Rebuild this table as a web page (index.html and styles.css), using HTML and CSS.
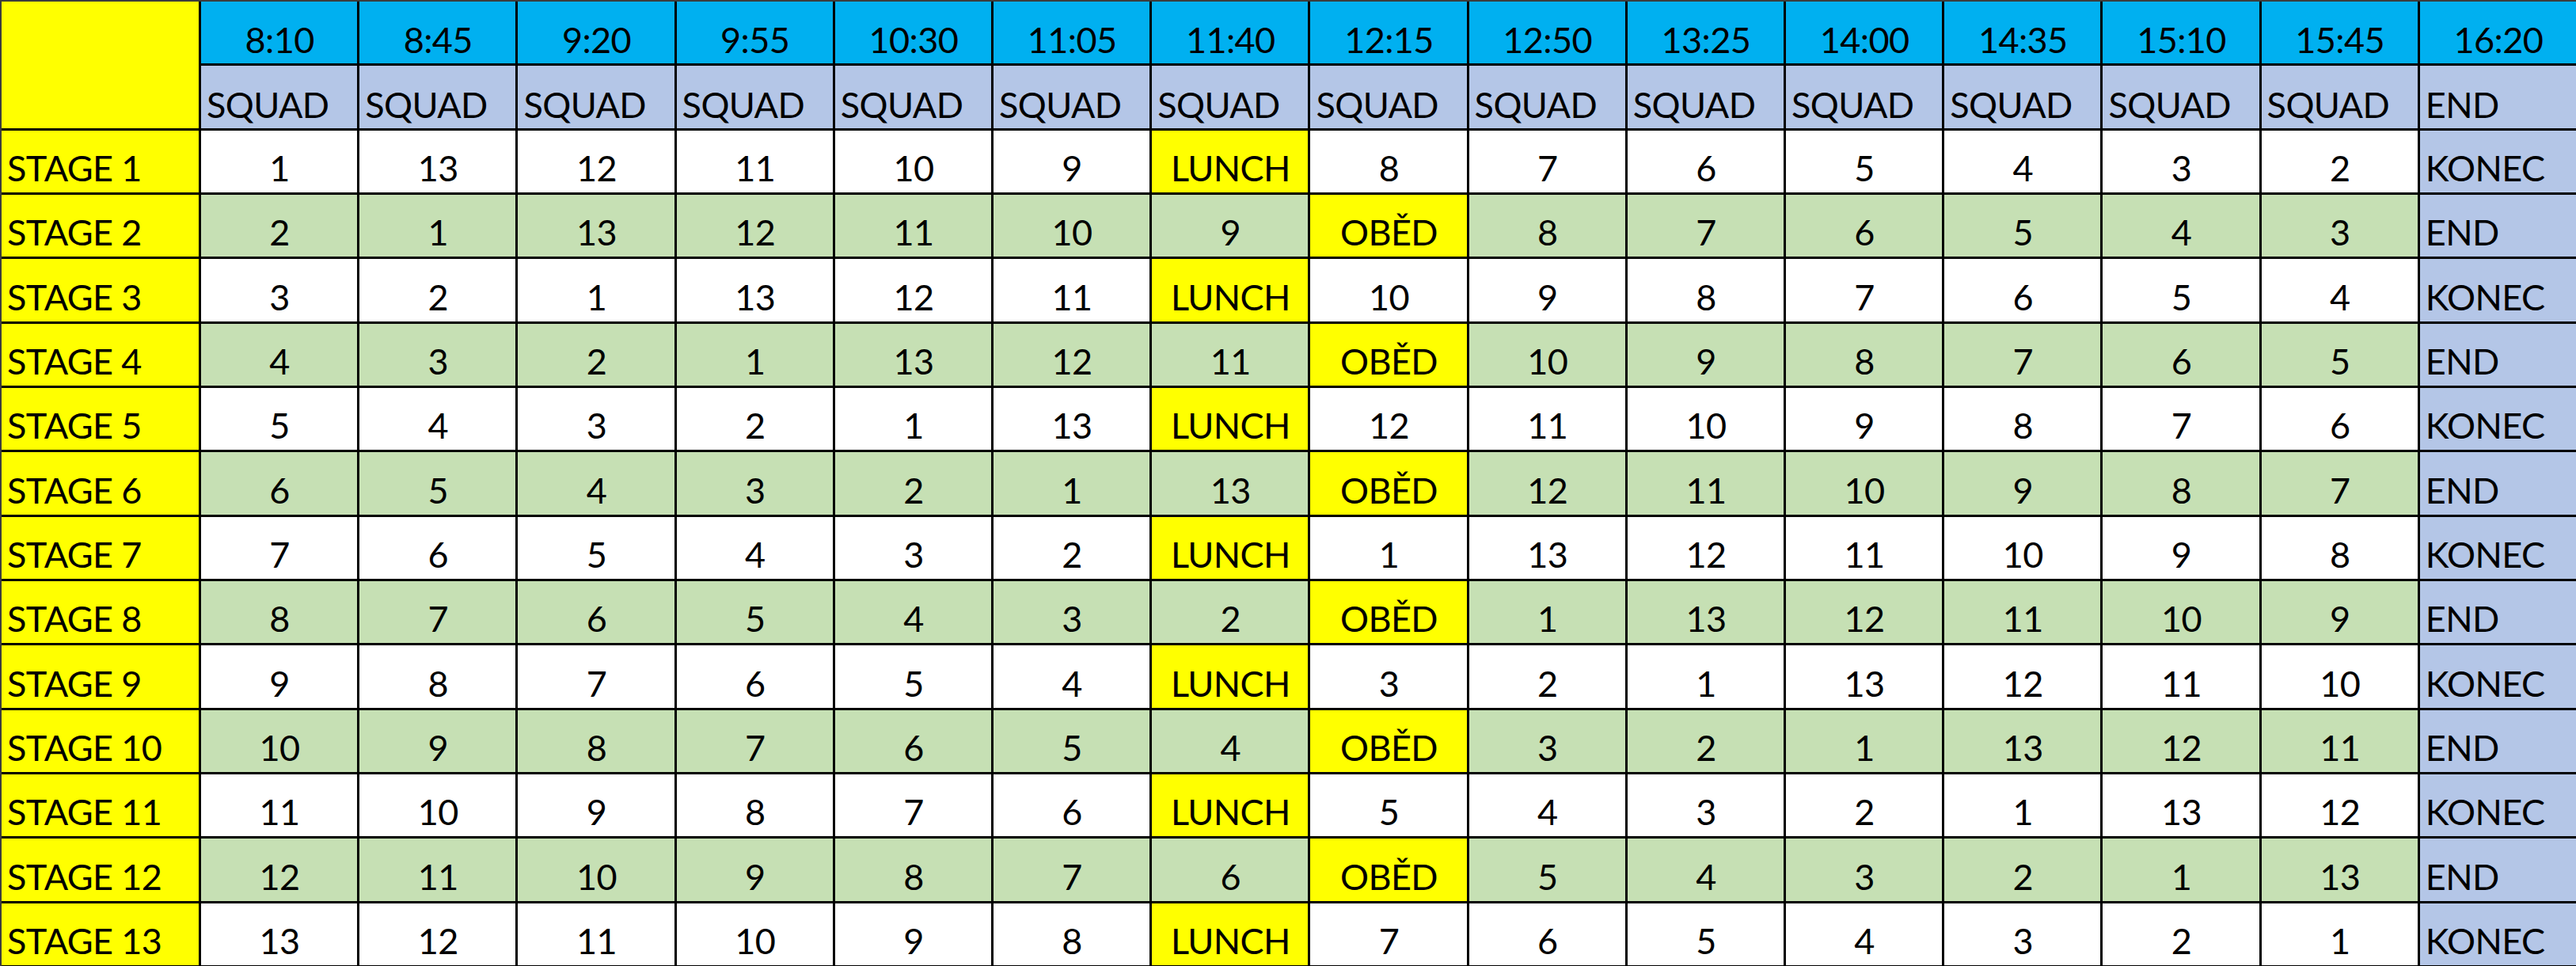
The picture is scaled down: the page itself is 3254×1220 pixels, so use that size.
FILE: index.html
```html
<!DOCTYPE html>
<html lang="cs">
<head>
<meta charset="utf-8">
<title>Rozpis</title>
<link rel="stylesheet" href="styles.css">
</head>
<body>
<div class="sheet">
  <div class="row head">
    <div class="c corner"></div>
    <div class="c time">8:10</div><div class="c time">8:45</div><div class="c time">9:20</div><div class="c time">9:55</div><div class="c time">10:30</div><div class="c time">11:05</div><div class="c time">11:40</div><div class="c time">12:15</div><div class="c time">12:50</div><div class="c time">13:25</div><div class="c time">14:00</div><div class="c time">14:35</div><div class="c time">15:10</div><div class="c time">15:45</div><div class="c time">16:20</div>
  </div>
  <div class="row sub">
    <div class="c sq">SQUAD</div><div class="c sq">SQUAD</div><div class="c sq">SQUAD</div><div class="c sq">SQUAD</div><div class="c sq">SQUAD</div><div class="c sq">SQUAD</div><div class="c sq">SQUAD</div><div class="c sq">SQUAD</div><div class="c sq">SQUAD</div><div class="c sq">SQUAD</div><div class="c sq">SQUAD</div><div class="c sq">SQUAD</div><div class="c sq">SQUAD</div><div class="c sq">SQUAD</div><div class="c sq">END</div>
  </div>
  <div class="row odd">
    <div class="c stage">STAGE 1</div><div class="c n">1</div><div class="c n">13</div><div class="c n">12</div><div class="c n">11</div><div class="c n">10</div><div class="c n">9</div><div class="c brk">LUNCH</div><div class="c n">8</div><div class="c n">7</div><div class="c n">6</div><div class="c n">5</div><div class="c n">4</div><div class="c n">3</div><div class="c n">2</div><div class="c end">KONEC</div>
  </div>
  <div class="row even">
    <div class="c stage">STAGE 2</div><div class="c n">2</div><div class="c n">1</div><div class="c n">13</div><div class="c n">12</div><div class="c n">11</div><div class="c n">10</div><div class="c n">9</div><div class="c brk">OBĚD</div><div class="c n">8</div><div class="c n">7</div><div class="c n">6</div><div class="c n">5</div><div class="c n">4</div><div class="c n">3</div><div class="c end">END</div>
  </div>
  <div class="row odd">
    <div class="c stage">STAGE 3</div><div class="c n">3</div><div class="c n">2</div><div class="c n">1</div><div class="c n">13</div><div class="c n">12</div><div class="c n">11</div><div class="c brk">LUNCH</div><div class="c n">10</div><div class="c n">9</div><div class="c n">8</div><div class="c n">7</div><div class="c n">6</div><div class="c n">5</div><div class="c n">4</div><div class="c end">KONEC</div>
  </div>
  <div class="row even">
    <div class="c stage">STAGE 4</div><div class="c n">4</div><div class="c n">3</div><div class="c n">2</div><div class="c n">1</div><div class="c n">13</div><div class="c n">12</div><div class="c n">11</div><div class="c brk">OBĚD</div><div class="c n">10</div><div class="c n">9</div><div class="c n">8</div><div class="c n">7</div><div class="c n">6</div><div class="c n">5</div><div class="c end">END</div>
  </div>
  <div class="row odd">
    <div class="c stage">STAGE 5</div><div class="c n">5</div><div class="c n">4</div><div class="c n">3</div><div class="c n">2</div><div class="c n">1</div><div class="c n">13</div><div class="c brk">LUNCH</div><div class="c n">12</div><div class="c n">11</div><div class="c n">10</div><div class="c n">9</div><div class="c n">8</div><div class="c n">7</div><div class="c n">6</div><div class="c end">KONEC</div>
  </div>
  <div class="row even">
    <div class="c stage">STAGE 6</div><div class="c n">6</div><div class="c n">5</div><div class="c n">4</div><div class="c n">3</div><div class="c n">2</div><div class="c n">1</div><div class="c n">13</div><div class="c brk">OBĚD</div><div class="c n">12</div><div class="c n">11</div><div class="c n">10</div><div class="c n">9</div><div class="c n">8</div><div class="c n">7</div><div class="c end">END</div>
  </div>
  <div class="row odd">
    <div class="c stage">STAGE 7</div><div class="c n">7</div><div class="c n">6</div><div class="c n">5</div><div class="c n">4</div><div class="c n">3</div><div class="c n">2</div><div class="c brk">LUNCH</div><div class="c n">1</div><div class="c n">13</div><div class="c n">12</div><div class="c n">11</div><div class="c n">10</div><div class="c n">9</div><div class="c n">8</div><div class="c end">KONEC</div>
  </div>
  <div class="row even">
    <div class="c stage">STAGE 8</div><div class="c n">8</div><div class="c n">7</div><div class="c n">6</div><div class="c n">5</div><div class="c n">4</div><div class="c n">3</div><div class="c n">2</div><div class="c brk">OBĚD</div><div class="c n">1</div><div class="c n">13</div><div class="c n">12</div><div class="c n">11</div><div class="c n">10</div><div class="c n">9</div><div class="c end">END</div>
  </div>
  <div class="row odd">
    <div class="c stage">STAGE 9</div><div class="c n">9</div><div class="c n">8</div><div class="c n">7</div><div class="c n">6</div><div class="c n">5</div><div class="c n">4</div><div class="c brk">LUNCH</div><div class="c n">3</div><div class="c n">2</div><div class="c n">1</div><div class="c n">13</div><div class="c n">12</div><div class="c n">11</div><div class="c n">10</div><div class="c end">KONEC</div>
  </div>
  <div class="row even">
    <div class="c stage">STAGE 10</div><div class="c n">10</div><div class="c n">9</div><div class="c n">8</div><div class="c n">7</div><div class="c n">6</div><div class="c n">5</div><div class="c n">4</div><div class="c brk">OBĚD</div><div class="c n">3</div><div class="c n">2</div><div class="c n">1</div><div class="c n">13</div><div class="c n">12</div><div class="c n">11</div><div class="c end">END</div>
  </div>
  <div class="row odd">
    <div class="c stage">STAGE 11</div><div class="c n">11</div><div class="c n">10</div><div class="c n">9</div><div class="c n">8</div><div class="c n">7</div><div class="c n">6</div><div class="c brk">LUNCH</div><div class="c n">5</div><div class="c n">4</div><div class="c n">3</div><div class="c n">2</div><div class="c n">1</div><div class="c n">13</div><div class="c n">12</div><div class="c end">KONEC</div>
  </div>
  <div class="row even">
    <div class="c stage">STAGE 12</div><div class="c n">12</div><div class="c n">11</div><div class="c n">10</div><div class="c n">9</div><div class="c n">8</div><div class="c n">7</div><div class="c n">6</div><div class="c brk">OBĚD</div><div class="c n">5</div><div class="c n">4</div><div class="c n">3</div><div class="c n">2</div><div class="c n">1</div><div class="c n">13</div><div class="c end">END</div>
  </div>
  <div class="row odd">
    <div class="c stage">STAGE 13</div><div class="c n">13</div><div class="c n">12</div><div class="c n">11</div><div class="c n">10</div><div class="c n">9</div><div class="c n">8</div><div class="c brk">LUNCH</div><div class="c n">7</div><div class="c n">6</div><div class="c n">5</div><div class="c n">4</div><div class="c n">3</div><div class="c n">2</div><div class="c n">1</div><div class="c end">KONEC</div>
  </div>
</div>
</body>
</html>
```
FILE: styles.css
```css
html, body {
  margin: 0;
  padding: 0;
  background: #ffffff;
}

.sheet {
  box-sizing: border-box;
  width: 3254px;
  height: 1220px;
  display: grid;
  grid-template-columns: 249px repeat(15, 1fr);
  grid-template-rows: repeat(15, 1fr);
  gap: 3px;
  background: #000000;
  border-top: 2px solid #3c3c3c;
  border-left: 2px solid #3c3c3c;
  padding-bottom: 1px;
  font-family: "Lato", "Liberation Sans", sans-serif;
  font-size: 45px;
  letter-spacing: -0.6px;
  color: #000000;
}

.row {
  display: contents;
}

.c {
  display: flex;
  align-items: flex-end;
  line-height: 45px;
  padding: 0 6px 8px 7px;
  white-space: nowrap;
  overflow: hidden;
}

.corner {
  grid-row: 1 / span 2;
  background: #ffff00;
}

.time {
  background: #00b0f0;
  justify-content: center;
  padding-bottom: 7px;
}

.sq {
  background: #b4c6e7;
  padding-bottom: 7px;
}

.stage {
  background: #ffff00;
}

.n {
  justify-content: center;
}

.odd .n {
  background: #ffffff;
}

.even .n {
  background: #c6e0b4;
}

.brk {
  background: #ffff00;
  justify-content: center;
}

.end {
  background: #b4c6e7;
}
```
